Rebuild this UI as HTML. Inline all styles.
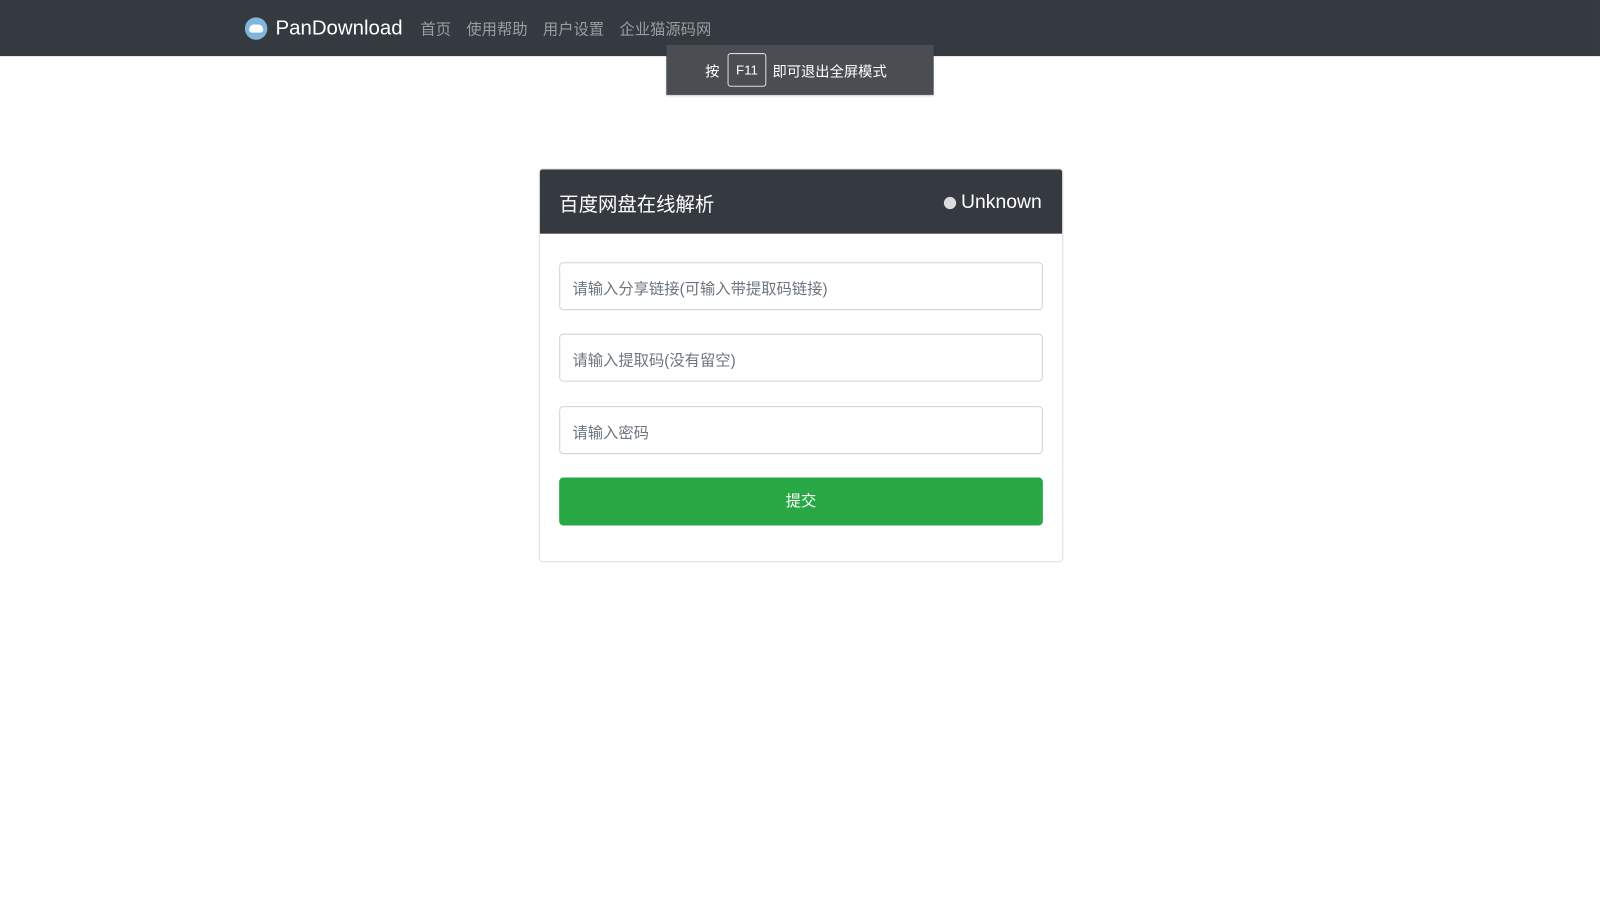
<!DOCTYPE html>
<html><head><meta charset="utf-8"><style>
*{box-sizing:border-box;margin:0;padding:0}
body{width:1600px;height:900px;background:#fff;font-family:"Liberation Sans","Noto Sans CJK SC",sans-serif;overflow:hidden}
.w{position:relative;width:1568px;height:882px;transform:scale(1.0204);transform-origin:0 0}
.nav{position:absolute;left:0;top:0;width:1568px;height:55px;background:#343a40}
.logo{position:absolute;left:240px;top:17px;width:22px;height:22px;border-radius:50%;background:#7fb6dc}
.logo:after{content:"";position:absolute;left:4px;top:7px;width:14px;height:8px;background:#fff;border-radius:5px 5px 3px 3px}
.brand{position:absolute;left:270px;top:17px;color:#fff;font-size:20px}
.links{position:absolute;left:412px;top:18px;color:#9a9da0;font-size:15px}
.links span{margin-right:15px}
.tip{position:absolute;left:653px;top:44px;width:262px;height:49px;background:#4a4e53;color:#fff;font-size:14px;box-shadow:0 1px 2px rgba(0,0,0,.3)}
.tip .a{position:absolute;left:38px;top:16px}
.tip .k{position:absolute;left:60px;top:8px;width:38px;height:33px;border:1px solid #ddd;border-radius:3px;text-align:center;line-height:31px;font-size:13px}
.tip .b{position:absolute;left:104px;top:16px}
.card{position:absolute;left:528px;top:165px;width:514px;height:386px;border:1px solid #ddd;border-radius:4px;overflow:hidden}
.hd{height:63px;background:#343a40;color:#fff;position:relative}
.hd .t{position:absolute;left:19px;top:20px;font-size:19px}
.hd .u{position:absolute;right:20px;top:22px;font-size:19px}
.hd .d{display:inline-block;width:12px;height:12px;border-radius:50%;background:#ddd;margin-right:5px;vertical-align:-1px}
.in{position:absolute;left:19px;width:474px;height:47px;border:1px solid #ced4da;border-radius:4px;color:#6c757d;font-size:15px;padding:14px 12px}
.btn{position:absolute;left:19px;top:302px;width:474px;height:47px;background:#28a745;border-radius:4px;color:#fff;font-size:15px;text-align:center;line-height:47px}
</style></head><body><div class="w">
<div class="nav"><div class="logo"></div><div class="brand">PanDownload</div>
<div class="links"><span>首页</span><span>使用帮助</span><span>用户设置</span><span>企业猫源码网</span></div></div>
<div class="tip"><span class="a">按</span><span class="k">F11</span><span class="b">即可退出全屏模式</span></div>
<div class="card"><div class="hd"><span class="t">百度网盘在线解析</span><span class="u"><span class="d"></span>Unknown</span></div>
<div class="in" style="top:91px">请输入分享链接(可输入带提取码链接)</div>
<div class="in" style="top:161px">请输入提取码(没有留空)</div>
<div class="in" style="top:232px">请输入密码</div>
<div class="btn">提交</div></div>
</div></body></html>
